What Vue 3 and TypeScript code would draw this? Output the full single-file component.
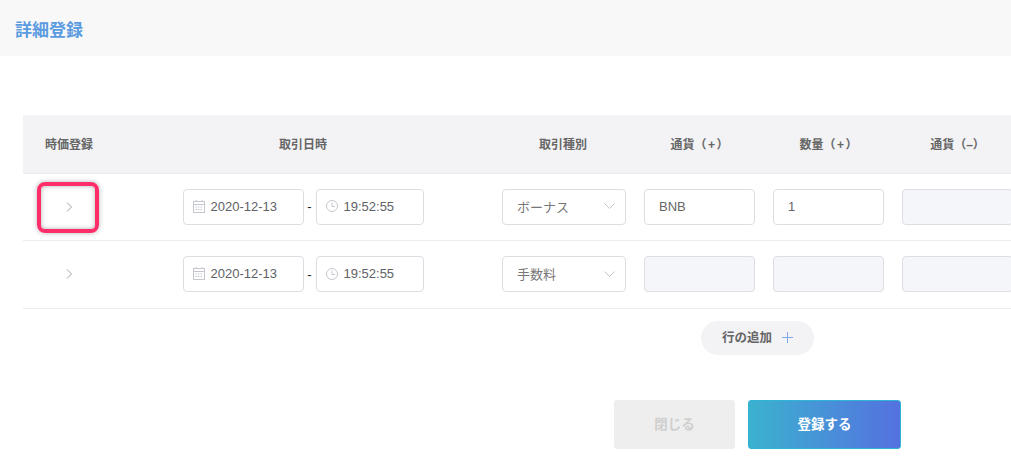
<script setup lang="ts">
interface Row { type: string; cur: string; qty: string; flagged: boolean }
const rows: Row[] = [
  { type: 'ボーナス', cur: 'BNB', qty: '1', flagged: true },
  { type: '手数料', cur: '', qty: '', flagged: false },
]
</script>

<template>
  <div class="page">
    <header class="title-bar"><h1>詳細登録</h1></header>
    <section class="table">
      <div class="grid head">
        <div>時価登録</div>
        <div>取引日時</div>
        <div>取引種別</div>
        <div>通貨（<span class="sign">+</span>）</div>
        <div>数量（<span class="sign">+</span>）</div>
        <div>通貨（–）</div>
      </div>
      <div v-for="(r, i) in rows" :key="i" class="grid row">
        <div class="expand">
          <svg width="8" height="12" viewBox="0 0 8 12" fill="none"><path d="M2 1.5 6.5 6 2 10.5" stroke="#a0a2a8" stroke-width="1" /></svg>
          <span v-if="r.flagged" class="flag"></span>
        </div>
        <div class="dt">
          <div class="field date">
            <svg width="12" height="13" viewBox="0 0 12 13" fill="none" stroke="#c4c7cf"><rect x="0.5" y="1.5" width="11" height="11" /><path d="M0.5 4.5h11" /><path d="M3 0v2M9 0v2" /><path d="M2.5 7h7M2.5 9.5h7" stroke-dasharray="1.5 1" /></svg>
            <span>2020-12-13</span>
          </div>
          <span class="dash">-</span>
          <div class="field time">
            <svg width="12" height="12" viewBox="0 0 12 12" fill="none" stroke="#c4c7cf"><circle cx="6" cy="6" r="5.5" /><path d="M6 2.5V6.5H9" /></svg>
            <span>19:52:55</span>
          </div>
        </div>
        <div class="type-cell">
          <div class="field select">
            <span>{{ r.type }}</span>
            <svg width="11" height="6" viewBox="0 0 11 6" fill="none"><path d="M0.5 0.5 5.5 5.5 10.5 0.5" stroke="#c4c7cf" /></svg>
          </div>
        </div>
        <div class="cell"><div class="field plain" :class="{ off: !r.cur }">{{ r.cur }}</div></div>
        <div class="cell"><div class="field plain" :class="{ off: !r.qty }">{{ r.qty }}</div></div>
        <div class="cell"><div class="field plain off"></div></div>
      </div>
    </section>
    <div class="add-wrap">
      <button class="add"><span>行の追加</span>
        <svg width="11" height="11" viewBox="0 0 11 11" fill="none"><path d="M5.5 0v11M0 5.5h11" stroke="#7fa8e6" /></svg>
      </button>
    </div>
    <div class="actions">
      <button class="close">閉じる</button>
      <button class="submit">登録する</button>
    </div>
  </div>
</template>

<style>
html, body { margin: 0; background: #fff; overflow: hidden; }
</style>

<style scoped>
.page {
  width: 1011px;
  height: 472px;
  overflow: hidden;
  font-family: "Liberation Sans", "Noto Sans CJK JP", sans-serif;
  color: #606266;
  text-spacing-trim: space-all;
}
.title-bar {
  height: 56px;
  background: #f8f8f9;
  display: flex;
  align-items: center;
  padding-left: 15px;
  box-sizing: border-box;
}
.title-bar h1 { margin: 0; font-size: 17px; font-weight: 700; color: #5b9bdf; }
.table { margin: 59px 0 0 23px; width: 999px; border-bottom: 1px solid #ebebf0; }
.grid {
  display: grid;
  grid-template-columns: 92px 376px 144px 129px 129px 129px;
  align-items: center;
}
.head {
  height: 57.5px;
  background: #f3f3f6;
  font-size: 12px;
  font-weight: 700;
  text-align: center;
  color: #666;
}
.sign { margin: 0 1.5px; }
.row { height: 67.5px; border-top: 1px solid #ebebf0; box-sizing: border-box; }
.expand { position: relative; height: 100%; display: flex; align-items: center; justify-content: center; }
.flag {
  position: absolute;
  left: 14px;
  top: 8.5px;
  width: 62px;
  height: 51px;
  box-sizing: border-box;
  border: 4px solid #ff2e6a;
  border-radius: 8px;
  box-shadow: 0 0 5px rgba(0, 0, 0, .3), inset 0 0 5px rgba(0, 0, 0, .3);
}
.dt { display: flex; align-items: center; justify-content: center; font-size: 13px; }
.dash { width: 12px; text-align: center; color: #222; }
.field {
  height: 36px;
  box-sizing: border-box;
  border: 1px solid #dcdee4;
  border-radius: 4px;
  display: flex;
  align-items: center;
  font-size: 13px;
  background: #fff;
  padding-bottom: 1px;
}
.date { width: 121px; padding-left: 9px; gap: 6px; }
.time { width: 108px; padding-left: 9px; gap: 6px; }
.type-cell { padding-left: 11px; }
.select { width: 124px; padding: 0 10px 1px 14px; justify-content: space-between; color: #777; }
.cell { padding: 0 9px; }
.plain { padding-left: 14px; color: #666; }
.off { background: #f5f6fa; }
.add-wrap { width: 1011px; display: flex; padding-left: 701px; box-sizing: border-box; margin-top: 12px; }
button { font-family: inherit; border: none; cursor: pointer; padding: 0; }
.add {
  width: 113px;
  height: 34px;
  border-radius: 17px;
  background: #f3f3f6;
  color: #666;
  font-size: 12.5px;
  font-weight: 700;
  display: flex;
  align-items: center;
  justify-content: center;
  gap: 10px;
  padding-bottom: 2px;
}
.add svg { margin-top: 2px; }
.actions { display: flex; gap: 13px; padding-left: 614px; margin-top: 45px; }
.close, .submit { height: 49px; border-radius: 3px; font-size: 13.5px; font-weight: 700; padding-bottom: 3px; }
.close { width: 121px; background: #eee; color: #cfcfcf; }
.submit {
  width: 153px;
  background: linear-gradient(90deg, #3bb2cf, #5471e0);
  color: #fff;
  border: 1px solid #30b4d6;
}
</style>
